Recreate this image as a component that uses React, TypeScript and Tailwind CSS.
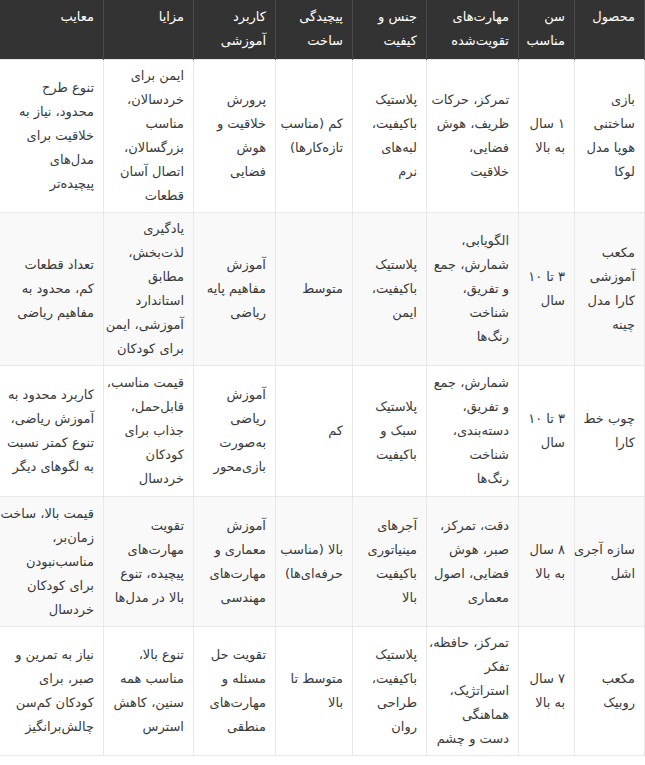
const headers: string[][] = [
  ["محصول"],
  ["سن", "مناسب"],
  ["مهارت‌های", "تقویت‌شده"],
  ["جنس و", "کیفیت"],
  ["پیچیدگی", "ساخت"],
  ["کاربرد", "آموزشی"],
  ["مزایا"],
  ["معایب"],
];

const widths = ["w-[70px]", "w-[56px]", "w-[92px]", "w-[74px]", "w-[77px]", "w-[82px]", "w-[90px]", "w-[104px]"];

const heights = ["h-[153px]", "h-[153px]", "h-[131px]", "h-[130px]", "h-[128px]"];

const rows: string[][][] = [
  [
    ["بازی", "ساختنی", "هوپا مدل", "لوکا"],
    ["۱ سال", "به بالا"],
    ["تمرکز، حرکات", "ظریف، هوش", "فضایی،", "خلاقیت"],
    ["پلاستیک", "باکیفیت،", "لبه‌های", "نرم"],
    ["کم (مناسب", "تازه‌کارها)"],
    ["پرورش", "خلاقیت و", "هوش", "فضایی"],
    ["ایمن برای", "خردسالان،", "مناسب", "بزرگسالان،", "اتصال آسان", "قطعات"],
    ["تنوع طرح", "محدود، نیاز به", "خلاقیت برای", "مدل‌های", "پیچیده‌تر"],
  ],
  [
    ["مکعب", "آموزشی", "کارا مدل", "چینه"],
    ["۳ تا ۱۰", "سال"],
    ["الگویابی،", "شمارش، جمع", "و تفریق،", "شناخت", "رنگ‌ها"],
    ["پلاستیک", "باکیفیت،", "ایمن"],
    ["متوسط"],
    ["آموزش", "مفاهیم پایه", "ریاضی"],
    ["یادگیری", "لذت‌بخش،", "مطابق", "استاندارد", "آموزشی، ایمن", "برای کودکان"],
    ["تعداد قطعات", "کم، محدود به", "مفاهیم ریاضی"],
  ],
  [
    ["چوب خط", "کارا"],
    ["۳ تا ۱۰", "سال"],
    ["شمارش، جمع", "و تفریق،", "دسته‌بندی،", "شناخت", "رنگ‌ها"],
    ["پلاستیک", "سبک و", "باکیفیت"],
    ["کم"],
    ["آموزش", "ریاضی", "به‌صورت", "بازی‌محور"],
    ["قیمت مناسب،", "قابل‌حمل،", "جذاب برای", "کودکان", "خردسال"],
    ["کاربرد محدود به", "آموزش ریاضی،", "تنوع کمتر نسبت", "به لگوهای دیگر"],
  ],
  [
    ["سازه آجری", "اشل"],
    ["۸ سال", "به بالا"],
    ["دقت، تمرکز،", "صبر، هوش", "فضایی، اصول", "معماری"],
    ["آجرهای", "مینیاتوری", "باکیفیت", "بالا"],
    ["بالا (مناسب", "حرفه‌ای‌ها)"],
    ["آموزش", "معماری و", "مهارت‌های", "مهندسی"],
    ["تقویت", "مهارت‌های", "پیچیده، تنوع", "بالا در مدل‌ها"],
    ["قیمت بالا، ساخت", "زمان‌بر،", "مناسب‌نبودن", "برای کودکان", "خردسال"],
  ],
  [
    ["مکعب", "روبیک"],
    ["۷ سال", "به بالا"],
    ["تمرکز، حافظه،", "تفکر", "استراتژیک،", "هماهنگی", "دست و چشم"],
    ["پلاستیک", "باکیفیت،", "طراحی", "روان"],
    ["متوسط تا", "بالا"],
    ["تقویت حل", "مسئله و", "مهارت‌های", "منطقی"],
    ["تنوع بالا،", "مناسب همه", "سنین، کاهش", "استرس"],
    ["نیاز به تمرین و", "صبر، برای", "کودکان کم‌سن", "چالش‌برانگیز"],
  ],
];

const Lines = ({ lines }: { lines: string[] }) => (
  <>
    {lines.map((l, i) => (
      <div key={i} className="whitespace-nowrap">
        {l}
      </div>
    ))}
  </>
);

export default function App() {
  return (
    <div
      dir="rtl"
      className="w-[645px] min-h-[765px] bg-white font-['DejaVu_Sans',sans-serif] text-[13px] leading-6 text-[#3a3a3a]"
    >
      <table className="w-full table-fixed border-collapse">
        <colgroup>
          {widths.map((w, i) => (
            <col key={i} className={w} />
          ))}
        </colgroup>
        <thead>
          <tr className="h-[59px] bg-[#333333]">
            {headers.map((h, i) => (
              <th
                key={i}
                className="border-x border-[#4a4a4a] px-[9px] pt-[5px] pb-[6px] text-right align-top font-normal text-white"
              >
                <Lines lines={h} />
              </th>
            ))}
          </tr>
        </thead>
        <tbody>
          {rows.map((row, r) => (
            <tr key={r} className={`${heights[r]} ${r % 2 === 1 ? "bg-[#f9f9f9]" : "bg-white"}`}>
              {row.map((cell, c) => (
                <td
                  key={c}
                  className="border border-[#e8e8e8] px-[9px] py-1 text-right align-middle"
                >
                  <Lines lines={cell} />
                </td>
              ))}
            </tr>
          ))}
        </tbody>
      </table>
    </div>
  );
}
